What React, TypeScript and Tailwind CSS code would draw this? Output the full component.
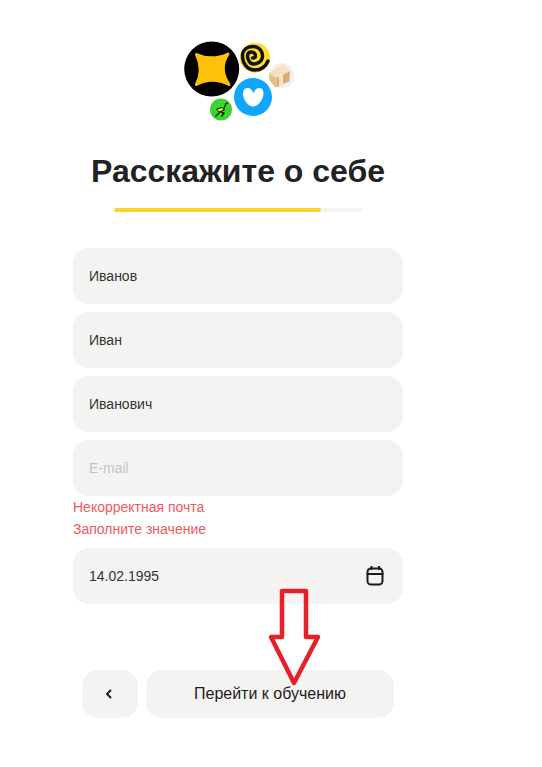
export default function App() {
  const field = "h-14 rounded-2xl bg-[#f4f3f2] px-4 flex items-center text-sm text-[#333333]";
  return (
    <div className="relative w-[542px] h-[767px] bg-white overflow-hidden font-['Liberation_Sans',Arial,sans-serif]">
      <div className="ml-[73px] w-[330px] flex flex-col">
        <svg className="mt-[30px] mx-auto block" width="140" height="100" viewBox="168 30 140 100">
          <circle cx="211.7" cy="69" r="27.5" fill="#000" />
          <path d="M196.5 54.5 Q212 61.5 228 54 Q218 69 229 84.5 Q212 76 196.5 84.5 Q204 69.5 196.5 54.5Z" fill="#fdc10a" stroke="#fdc10a" strokeWidth="3" strokeLinejoin="round" />
          <circle cx="255" cy="57.7" r="15" fill="#fcdc2e" />
          <path d="M268 61 C265 68 259 70 255 70 C247 70 242.5 63 242.5 56 C242.5 50 247 46.5 253 46.5 C259 46.5 262.5 51 262.5 56 C262.5 61 258 64 253.5 64 C250 64 247.5 60 247.5 56 C247.5 53.5 249 52 251.5 52 C254 52 255.5 54 255.5 56 C255.5 57.5 254 58 252.5 58" fill="none" stroke="#111" strokeWidth="3.4" strokeLinecap="round" />
          <circle cx="281.7" cy="75.5" r="12.7" fill="#f3f0ee" />
          <path d="M269.3 73 L283.3 64 L290 71.3 L276.5 78Z" fill="#f5e0bf" />
          <path d="M269.3 73 L276.5 78 L277 87 L275 87.3 L269.3 80Z" fill="#e6c08a" />
          <path d="M276.5 78 L290 71.3 L289.3 81.3 L277 87Z" fill="#dcae72" />
          <path d="M274 70 L278 68 L283 74 L283 84.5 L279 86 L279 76Z" fill="#f4e2c6" />
          <circle cx="253" cy="97" r="19" fill="#0fa6fb" />
          <path d="M253.5 93.5 C252.5 90 250.5 88 247.5 88 C244.5 88 243 90.5 243 94 C243 99.5 248 106.5 253 106.5 C258.5 106.5 263.5 99 263.5 93.5 C263.5 90 262 88 259.5 88 C256.5 88 254.5 90 253.5 93.5Z" fill="#fff" />
          <circle cx="221" cy="109.5" r="11" fill="#3ad62f" />
          <path d="M216.5 109 L222 107.5 L224.5 110 L219 112Z" fill="#f0e020" stroke="#10260c" strokeWidth="1" />
          <path d="M223.5 109.5 L226 103.5 L228 103 M220 112 L215.5 116.5 M221 112 L224 113 L221.5 116.5" fill="none" stroke="#10260c" strokeWidth="1.4" />
        </svg>
        <h1 className="mt-[19px] h-11 flex items-center justify-center whitespace-nowrap text-[32px] leading-[44px] font-bold text-[#222222]">
          Расскажите о себе
        </h1>
        <div className="mt-[15px] mx-auto w-[248px] h-1 rounded-full bg-[#f4f3f2]">
          <div className="w-[207px] h-1 rounded-full bg-[#fad52e]" />
        </div>
        <div className="mt-9 flex flex-col gap-2">
          <div className={field}>Иванов</div>
          <div className={field}>Иван</div>
          <div className={field}>Иванович</div>
          <div>
            <div className={field + " !text-[#c4c4c4]"}>E-mail</div>
            <p className="text-sm leading-[22px] text-[#ee5a60]">Некорректная почта</p>
            <p className="text-sm leading-[22px] text-[#ee5a60]">Заполните значение</p>
          </div>
          <div className={field + " justify-between pr-[18px]"}>
            <span>14.02.1995</span>
            <svg width="20" height="20" viewBox="0 0 20 20" fill="none" stroke="#1c1c1c" strokeWidth="2" strokeLinecap="round" strokeLinejoin="round">
              <rect x="2.5" y="2.5" width="15" height="16" rx="3.5" />
              <path d="M2.5 8h15M6.5 0.5v2.5M14 0.5v2.5" />
            </svg>
          </div>
        </div>
        <div className="mt-[66px] ml-[9px] flex gap-2">
          <button className="w-14 h-12 rounded-2xl bg-[#f4f3f2] flex items-center justify-center">
            <svg width="10" height="12" viewBox="0 0 10 12" fill="none" stroke="#1c1c1c" strokeWidth="2" strokeLinecap="round" strokeLinejoin="round">
              <path d="M5.5 2.5 L2 6 L5.5 9.5" />
            </svg>
          </button>
          <button className="w-[248px] h-12 rounded-2xl bg-[#f4f3f2] flex items-center justify-center text-base text-[#1c1c1c]">
            Перейти к обучению
          </button>
        </div>
      </div>
      <svg className="absolute left-[266px] top-[586px]" width="56" height="104" viewBox="0 0 56 104" fill="none">
        <path d="M16 5 H40 V51 H52 L28 97 L5 51 H16 Z" stroke="#e6202b" strokeWidth="4.5" strokeLinejoin="round" />
      </svg>
    </div>
  );
}
